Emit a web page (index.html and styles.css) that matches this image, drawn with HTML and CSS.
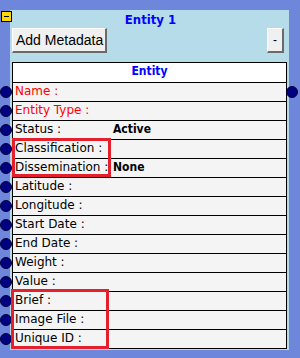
FILE: index.html
```html
<!DOCTYPE html>
<html>
<head>
  <title>Entity 1</title>
  <link rel="stylesheet" href="styles.css">
</head>
<body>
  <div class="collapse"><span></span></div>

  <div class="panel">
    <div class="title">Entity 1</div>

    <div class="toolbar">
      <button class="btn">Add Metadata</button>
      <button class="btn btn-small">-</button>
    </div>

    <div class="grid">
      <div class="head">Entity</div>

      <div class="row required"><span class="label">Name :</span><span class="value"></span><i class="dot"></i><i class="dot dot-right"></i></div>
      <div class="row required"><span class="label">Entity Type :</span><span class="value"></span><i class="dot"></i></div>
      <div class="row"><span class="label">Status :</span><span class="value">Active</span><i class="dot"></i></div>
      <div class="row"><span class="label">Classification :</span><span class="value"></span><i class="dot"></i></div>
      <div class="row"><span class="label">Dissemination :</span><span class="value">None</span><i class="dot"></i></div>
      <div class="row"><span class="label">Latitude :</span><span class="value"></span><i class="dot"></i></div>
      <div class="row"><span class="label">Longitude :</span><span class="value"></span><i class="dot"></i></div>
      <div class="row"><span class="label">Start Date :</span><span class="value"></span><i class="dot"></i></div>
      <div class="row"><span class="label">End Date :</span><span class="value"></span><i class="dot"></i></div>
      <div class="row"><span class="label">Weight :</span><span class="value"></span><i class="dot"></i></div>
      <div class="row"><span class="label">Value :</span><span class="value"></span><i class="dot"></i></div>
      <div class="row"><span class="label">Brief :</span><span class="value"></span><i class="dot"></i></div>
      <div class="row"><span class="label">Image File :</span><span class="value"></span><i class="dot"></i></div>
      <div class="row"><span class="label">Unique ID :</span><span class="value"></span><i class="dot"></i></div>

      <!-- highlight boxes -->
      <div class="mark mark-a"></div>
      <div class="mark mark-b"></div>
    </div>
  </div>
</body>
</html>
```

FILE: styles.css
```css
body {
  margin: 0;
  width: 300px;
  height: 358px;
  background-color: #6f87db;
  font-family: "DejaVu Sans", Verdana, sans-serif;
  font-size: 12px;
  position: relative;
  overflow: hidden;
}
.collapse {
  position: absolute;
  left: 1px;
  top: 11px;
  width: 9px;
  height: 9px;
  background-color: #ffd800;
  border: 1px solid #000;
  z-index: 2;
}
.collapse span {
  position: absolute;
  left: 2px;
  top: 4px;
  width: 5px;
  height: 1px;
  background-color: #000;
}
.panel {
  margin: 10px 11px 0 10px;
  padding: 0 0 1px 2px;
  background-color: #b6dcea;
}
.title {
  text-align: center;
  color: #0000ff;
  font-family: "DejaVu Sans Condensed", "DejaVu Sans", sans-serif;
  font-weight: bold;
  font-size: 13px;
  line-height: 16px;
  padding-top: 2px;
}
.toolbar {
  display: flex;
  justify-content: space-between;
  padding-right: 5px;
}
.btn {
  height: 25px;
  padding: 0 2px 0 3px;
  background-color: #f0f0f0;
  border: 1px solid;
  border-color: #fff #6a6a6a #6a6a6a #fff;
  border-width: 1px 2px 2px 1px;
  font-family: "Liberation Sans", Arial, sans-serif;
  font-size: 14px;
  color: #000;
}
.btn-small {
  width: 17px;
  padding: 0;
  font-size: 12px;
}
.grid {
  position: relative;
  margin-top: 9px;
  width: 273px;
  border: 1px solid #000;
  border-bottom: none;
}
.head {
  background-color: #fff;
  color: #0000ff;
  font-family: "DejaVu Sans Condensed", "DejaVu Sans", sans-serif;
  font-weight: bold;
  text-align: center;
  line-height: 17px;
  padding-bottom: 2px;
  border-bottom: 1px solid #000;
}
.row {
  position: relative;
  display: grid;
  grid-template-columns: 100px 1fr;
  background-color: #f4f4f4;
  line-height: 16px;
  padding-bottom: 2px;
  border-bottom: 1px solid #000;
}
.label {
  padding-left: 2px;
  white-space: nowrap;
}
.required .label {
  color: #ff0000;
}
.value {
  font-family: "DejaVu Sans Condensed", "DejaVu Sans", sans-serif;
  font-weight: bold;
}
.dot {
  position: absolute;
  left: -13px;
  top: 3px;
  width: 10px;
  height: 10px;
  border-radius: 50%;
  background-color: #000080;
  border: 1px solid #00003a;
}
.dot-right {
  left: auto;
  right: -12px;
}
.mark {
  position: absolute;
  border: 3px solid #e3202c;
}
.mark-a {
  left: -1px;
  top: 75px;
  width: 93px;
  height: 33px;
}
.mark-b {
  left: -2px;
  top: 226px;
  width: 92px;
  height: 54px;
}
```
